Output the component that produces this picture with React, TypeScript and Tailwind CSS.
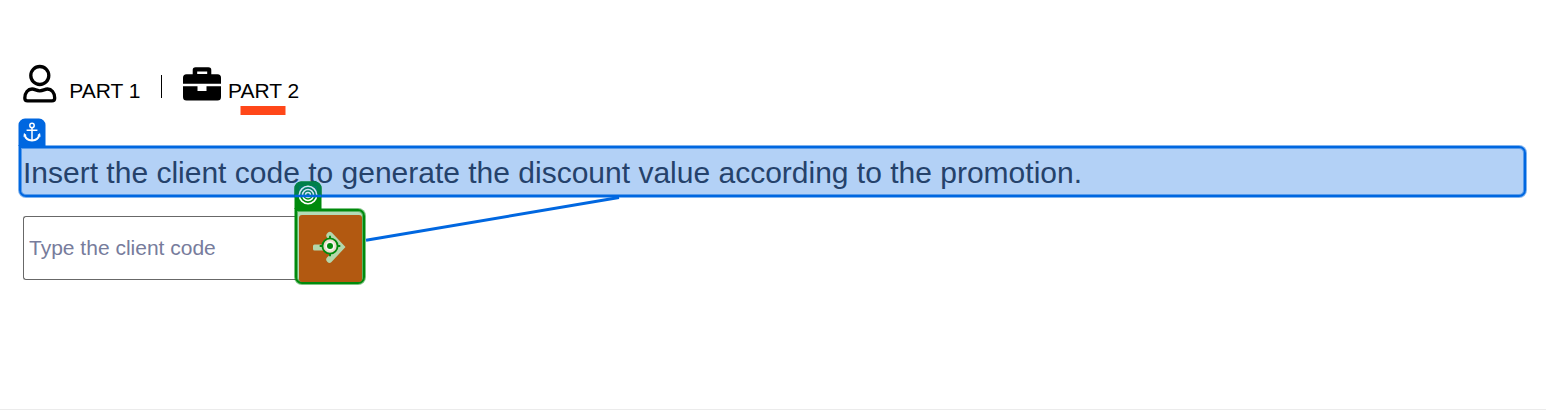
function UserIcon() {
  return (
    <svg className="h-[39px] w-[34px]" viewBox="0 0 34 39" fill="none" stroke="#000" strokeWidth="3.300">
      <circle cx="16.800" cy="11.500" r="9" />
      <path d="M4.600 36.900H28.900Q31.700 36.900 31.700 34C31.700 28.500 28.500 25 24.500 25 21.500 25 20.300 26.800 16.800 26.800S12.100 25 9.100 25C5 25 1.800 28.500 1.800 34Q1.800 36.900 4.600 36.900Z" />
    </svg>
  );
}

function BriefcaseIcon() {
  return (
    <svg className="ml-[21px] h-[38px] w-[38px]" viewBox="0 0 38 38">
      <path
        fillRule="evenodd"
        d="M9.700 10.300V6.500A3 3 0 0 1 12.700 3.300H25.300A3 3 0 0 1 28.300 6.500V10.300H34.500A3.500 3.500 0 0 1 38 13.800V19.800H0V13.800A3.500 3.500 0 0 1 3.500 10.300ZM14.200 7.600V10H24.200V7.600Z"
      />
      <path d="M0 22.200H14.500V27H23.500V22.200H38V33A3.500 3.500 0 0 1 34.500 36.500H3.500A3.500 3.500 0 0 1 0 33Z" />
    </svg>
  );
}

function AnchorTab() {
  return (
    <div className="absolute -left-[3px] -top-[30px] h-7 w-7">
      <svg className="h-7 w-7" viewBox="0 0 28 28" fill="none" stroke="#fff" strokeWidth="1.5">
        <path d="M.5 28V7a6.500 6.500 0 0 1 6.500-6.500h14A6.500 6.500 0 0 1 27.500 7v21Z" fill="#0067e0" stroke="none" />
        <circle cx="14" cy="7.500" r="2.200" />
        <path d="M14 10v12.500M8.600 12.300h10.800" />
        <path d="M6.500 16.500c.7 3.600 3.500 5.800 7.500 6 4-.2 6.800-2.400 7.500-6" strokeWidth="1.800" />
        <path d="m6.200 15.300-.5 3.400 2.600-1.500ZM21.800 15.300l.5 3.400-2.600-1.500Z" fill="#fff" strokeWidth=".4" />
      </svg>
    </div>
  );
}

function TargetTab() {
  return (
    <div className="absolute -left-[3px] -top-[30px] h-[29px] w-7">
      <svg className="h-[29px] w-7" viewBox="0 0 28 29" fill="none">
        <path d="M.5 28V7a6.500 6.500 0 0 1 6.500-6.500h14A6.500 6.500 0 0 1 27.500 7v21Z" fill="#008a0c" />
        <path d="M.5 14V7a6.500 6.500 0 0 1 6.500-6.500h14A6.500 6.500 0 0 1 27.500 7v7Z" fill="#00804a" />
        <g stroke="#fff" strokeWidth="1.500">
          <circle cx="14" cy="14" r="8.700" />
          <circle cx="14" cy="14" r="5.500" />
          <circle cx="14" cy="14" r="2.500" />
        </g>
        <path d="M5 5h18v9H5z" fill="#0067e0" fillOpacity=".18" />
        <path d="M.5 15H27.500" stroke="#0067e0" strokeWidth="2.600" />
      </svg>
    </div>
  );
}

export default function App() {
  return (
    <main className="relative h-[411px] overflow-hidden bg-white font-['Liberation_Sans',Arial,sans-serif]">
      <nav className="flex h-[146px] items-start pl-[23px] pt-[64px] text-[21px] leading-6 text-black">
        <UserIcon />
        <span className="ml-[12.250px] mt-[15px] w-[71.750px] whitespace-nowrap">PART 1</span>
        <span className="ml-[20px] mt-[11px] h-[23px] w-px bg-black" />
        <BriefcaseIcon />
        <div className="ml-[7px] mt-[15px] w-[72px]">
          <span className="block h-[27px] whitespace-nowrap">PART 2</span>
          <span className="ml-[13px] block h-[9px] w-[44px] bg-[#ff4719] shadow-[1px_0_0_#ff471980,-1px_0_0_#ff471980]" />
        </div>
      </nav>

      <div className="relative ml-[19px] h-[51px] w-[1507px] rounded-[7px] rounded-tl-none border-2 border-[#0067e0] bg-[#b3d1f6] shadow-[0_0_0_1px_#0067e080,inset_0_0_0_1px_#0067e080]">
        <h1 className="pl-[2px] pt-[7px] text-[30px] leading-[36px] whitespace-nowrap text-[#25426b]">
          Insert the client code to generate the discount value according to the promotion.
        </h1>
        <AnchorTab />
      </div>

      <form className="ml-[23px] flex pt-3" onSubmit={(e) => e.preventDefault()}>
        <input
          aria-label="Client code"
          placeholder="Type the client code"
          className="mt-[7px] h-[64px] w-[274px] rounded-l-[3px] border border-r-0 border-[#686868] pl-[5px] text-[21px] text-black outline-none placeholder:text-[#777c9c]"
        />
        <div className="relative -ml-[2px] h-[75px] w-[70px] rounded-[7px] rounded-tl-none border-2 border-[#008a0c] bg-[#b3dcb6] shadow-[0_0_0_1px_#008a0c80,inset_0_0_0_1px_#008a0c80]">
          <button aria-label="Submit" className="ml-[2px] mt-[4px] h-[67px] w-[63px] rounded-[3px] bg-[#b25911]">
            <svg className="h-[67px] w-[63px]" viewBox="0 0 63 67" fill="none">
              <path
                d="M15.500 29.500H31V35.500H15.500Q14 35.500 14 34V31Q14 29.500 15.500 29.500ZM29 17.500Q31 15.800 33 17.800L46.500 32 32.500 47Q30.500 49 28.500 47 26 44.500 28 42.500L38 32.500 28 22.500Q26 20 29 17.500Z"
                fill="#b3d7ac"
              />
              <circle cx="31" cy="31" r="7.600" fill="#e9dccb" stroke="#008a0c" strokeWidth="1.900" />
              <circle cx="31" cy="31" r="4.700" fill="#f5f7f0" />
              <circle cx="31" cy="31" r="3" fill="#008a0c" />
              <path d="M31 20.700v3.300M31 38v3.300M20.700 31H24M38 31h3.300" stroke="#008a0c" strokeWidth="1.900" />
            </svg>
          </button>
          <TargetTab />
        </div>
      </form>

      <svg className="absolute left-[365px] top-[195px] h-[50px] w-[260px]" viewBox="0 0 260 50">
        <path d="M1 45.300 254 2.500" stroke="#0067e0" strokeWidth="3" />
      </svg>
      <div className="absolute bottom-[1px] left-0 h-px w-full bg-[#ebebeb]" />
    </main>
  );
}
